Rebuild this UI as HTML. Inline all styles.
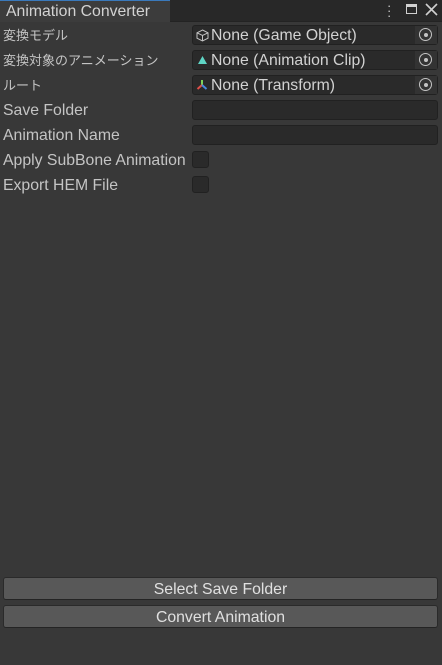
<!DOCTYPE html>
<html><head><style>
body{margin:0;width:442px;height:665px;background:#383838;font-family:"Liberation Sans","Noto Sans CJK JP",sans-serif;font-size:15.8px;color:#c4c4c4;position:relative;overflow:hidden}
.jp{font-size:13px}
.bar{position:absolute;left:0;top:0;width:442px;height:21px;background:#282828;border-bottom:1px solid #232323}
.tab{position:absolute;left:0;top:0;width:170px;height:22px;background:#3c3c3c;border-top:1px solid #3a79bb;box-sizing:border-box;color:#d2d2d2;padding:2px 0 0 6px;font-size:15.8px}
.lbl{position:absolute;left:3px;height:20px;line-height:22px}
.fld{position:absolute;left:192px;width:246px;height:20px;background:#2a2a2a;border:1px solid #212121;box-sizing:border-box;border-radius:3px;line-height:20px;color:#d2d2d2}
.fld .t{position:absolute;left:18px}
.fld .pk{position:absolute;right:0;top:0;width:22px;height:18px;background:#333}
.pk:after{content:"";position:absolute;left:4px;top:2px;width:11px;height:11px;border:1.5px solid #c4c4c4;border-radius:50%}
.pk:before{content:"";position:absolute;left:9px;top:7px;width:4px;height:4px;background:#c4c4c4;border-radius:50%}
.cb{position:absolute;left:192px;width:17px;height:17px;background:#2a2a2a;border:1px solid #212121;box-sizing:border-box;border-radius:3px}
.btn{position:absolute;left:3px;width:435px;height:23px;background:#585858;border:1px solid #2a2a2a;border-bottom-color:#242424;box-sizing:border-box;border-radius:3px;text-align:center;line-height:24px;color:#e0e0e0}
</style></head><body>
<div class="bar"></div>
<div class="tab">Animation Converter</div>
<div style="position:absolute;left:387px;top:3px;width:3px;height:14px;color:#ccc;font-size:13px;line-height:5px">·<br>·<br>·</div>
<div style="position:absolute;left:406px;top:4px;width:11px;height:10px;border:1.5px solid #d0d0d0;border-top-width:3px;box-sizing:border-box"></div>
<svg style="position:absolute;left:425px;top:3px" width="13" height="13"><path d="M1 1L12 12M12 1L1 12" stroke="#d0d0d0" stroke-width="1.6"/></svg>

<div class="lbl jp" style="top:25px">変換モデル</div>
<div class="lbl jp" style="top:50px">変換対象のアニメーション</div>
<div class="lbl jp" style="top:75px">ルート</div>
<div class="lbl" style="top:100px">Save Folder</div>
<div class="lbl" style="top:125px">Animation Name</div>
<div class="lbl" style="top:150px">Apply SubBone Animation</div>
<div class="lbl" style="top:175px">Export HEM File</div>

<div class="fld" style="top:25px"><svg style="position:absolute;left:3px;top:3px" width="13" height="13"><path d="M6.5 1L12 3.8V9.2L6.5 12L1 9.2V3.8Z M1 3.8L6.5 6.5L12 3.8 M6.5 6.5V12" fill="none" stroke="#c4c4c4" stroke-width="1"/></svg><span class="t">None (Game Object)</span><div class="pk"></div></div>
<div class="fld" style="top:50px"><svg style="position:absolute;left:4px;top:4px" width="11" height="10"><path d="M5.5 1L10 9H1Z" fill="#5fd5c5"/></svg><span class="t">None (Animation Clip)</span><div class="pk"></div></div>
<div class="fld" style="top:75px"><svg style="position:absolute;left:3px;top:3px" width="12" height="12"><path d="M6 6V1" stroke="#7ed35a" stroke-width="2"/><path d="M6 6L1.5 10" stroke="#e0504a" stroke-width="2"/><path d="M6 6L10.5 10" stroke="#4a8ae0" stroke-width="2"/></svg><span class="t">None (Transform)</span><div class="pk"></div></div>
<div class="fld" style="top:100px"></div>
<div class="fld" style="top:125px"></div>
<div class="cb" style="top:151px"></div>
<div class="cb" style="top:176px"></div>

<div class="btn" style="top:577px">Select Save Folder</div>
<div class="btn" style="top:605px">Convert Animation</div>
</body></html>
